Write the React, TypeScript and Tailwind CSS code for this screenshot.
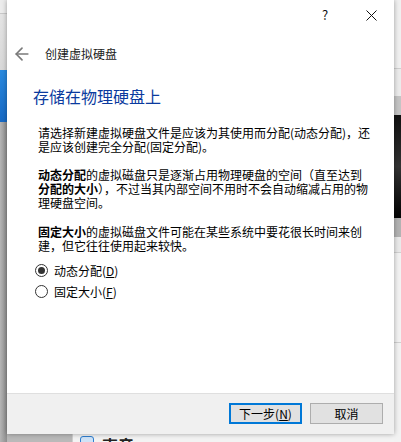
import { ArrowLeft } from 'lucide-react';

const font = { fontFamily: '"Noto Sans CJK SC", "Noto Sans", sans-serif' };

function Radio({ checked, children }: { checked?: boolean; children: React.ReactNode }) {
  return (
    <div className="flex h-[21px] items-center">
      <span className="flex h-[13px] w-[13px] items-center justify-center rounded-full border border-[#333] bg-white">
        {checked && <span className="h-[7px] w-[7px] rounded-full bg-[#333]" />}
      </span>
      <span className="ml-[6px] text-[12px] leading-[14px] text-black">{children}</span>
    </div>
  );
}

export default function App() {
  return (
    <div className="relative h-[442px] w-[401px] overflow-hidden bg-[#a9a9a9]" style={font}>
      {/* desktop behind the dialog */}
      <div className="flex h-full w-full">
        <div className="flex w-[7px] flex-col">
          <div className="h-[14px] border-b border-[#c8c8c8] bg-[#ececec]" />
          <div className="h-[56px] bg-gradient-to-b from-[#e4e4e4] to-[#d8d8d8]" />
          <div className="h-[52px] bg-gradient-to-b from-[#2a8ae0] to-[#1769c4]" />
          <div className="flex-1 bg-gradient-to-r from-[#b5b5b5] to-[#8e8e8e]" />
        </div>
        <div className="flex flex-1 flex-col">
          <div className="flex-1" />
          <div className="flex h-[8px]">
            <div className="w-[65px] bg-[#b9b9b9]" />
            <div className="flex flex-1 items-start gap-[8px] border-l border-[#cfcfcf] bg-[#f3f3f3] pl-[7px] pt-[1px]">
              <span className="mt-[1px] h-[10px] w-[14px] rounded-t-[3px] border border-[#2f7fd0] bg-[#cfe3f7]" />
              <span className="text-[16px] font-bold leading-[20px] text-[#222]">声音</span>
            </div>
          </div>
        </div>
        <div className="flex w-[7px] flex-col bg-[#f2f2f2]">
          <div className="h-[69px] border-b border-[#cfcfcf] bg-[#f0f0f0]" />
          <div className="h-[27px] bg-[#ebebeb]" />
          <div className="h-[19px] bg-[#c4c4c4]" />
          <div className="h-[103px] bg-gradient-to-b from-[#111] via-[#333] to-[#050505]" />
          <div className="h-[19px] bg-[#b2b2b2]" />
          <div className="h-[16px] border-b border-[#d0d0d0] bg-[#e9e9e9]" />
          <div className="h-[90px] border-b border-[#d0d0d0]" />
          <div className="flex-1" />
        </div>
      </div>

      {/* dialog window */}
      <div className="absolute left-[7px] top-0 flex h-[434px] w-[387px] flex-col bg-white shadow-[0_0_5px_rgba(0,0,0,0.35)]">
        <div className="flex h-[30px] justify-end">
          <div className="flex w-[46px] items-center justify-center text-[13px] text-[#111]">?</div>
          <div className="flex w-[46px] items-center justify-center">
            <svg width="11" height="11" viewBox="0 0 11 11">
              <path d="M0.5 0.5 L10.5 10.5 M10.5 0.5 L0.5 10.5" stroke="#111" strokeWidth="1" />
            </svg>
          </div>
        </div>

        <div className="flex h-[47px] items-center">
          <ArrowLeft className="ml-[5px] h-[20px] w-[20px] text-[#7a7a7a]" strokeWidth={2} />
          <span className="ml-[13px] text-[12px] leading-[14px] text-[#1a1a1a]">创建虚拟硬盘</span>
        </div>

        <div className="ml-[26px] mt-[9px] text-[16px] leading-[20px] text-[#0a3a9e]">存储在物理硬盘上</div>

        <div className="ml-[31px] mt-[20px] whitespace-nowrap text-[12px] leading-[14px] text-black">
          <p>
            请选择新建虚拟硬盘文件是应该为其使用而分配(动态分配)，还
            <br />
            是应该创建完全分配(固定分配)。
          </p>
          <p className="mt-[14px]">
            <b>动态分配</b>的虚拟磁盘只是逐渐占用物理硬盘的空间（直至达到
            <br />
            <b>分配的大小</b>），不过当其内部空间不用时不会自动缩减占用的物
            <br />
            理硬盘空间。
          </p>
          <p className="mt-[15px]">
            <b>固定大小</b>的虚拟磁盘文件可能在某些系统中要花很长时间来创
            <br />
            建，但它往往使用起来较快。
          </p>
        </div>

        <div className="ml-[28px] mt-[7px] flex flex-col">
          <Radio checked>
            动态分配(<u>D</u>)
          </Radio>
          <Radio>
            固定大小(<u>F</u>)
          </Radio>
        </div>

        <div className="flex-1" />

        <div className="flex h-[41px] items-start justify-end gap-[8px] border-t border-[#dfdfdf] bg-[#f0f0f0] pr-[11px] pt-[9px]">
          <button className="flex h-[21px] w-[73px] items-center justify-center border-2 border-[#0078d7] bg-[#e1e1e1] text-[12px] text-black">
            下一步(<u>N</u>)
          </button>
          <button className="flex h-[21px] w-[73px] items-center justify-center border border-[#adadad] bg-[#e1e1e1] text-[12px] text-black">
            取消
          </button>
        </div>
      </div>
    </div>
  );
}
